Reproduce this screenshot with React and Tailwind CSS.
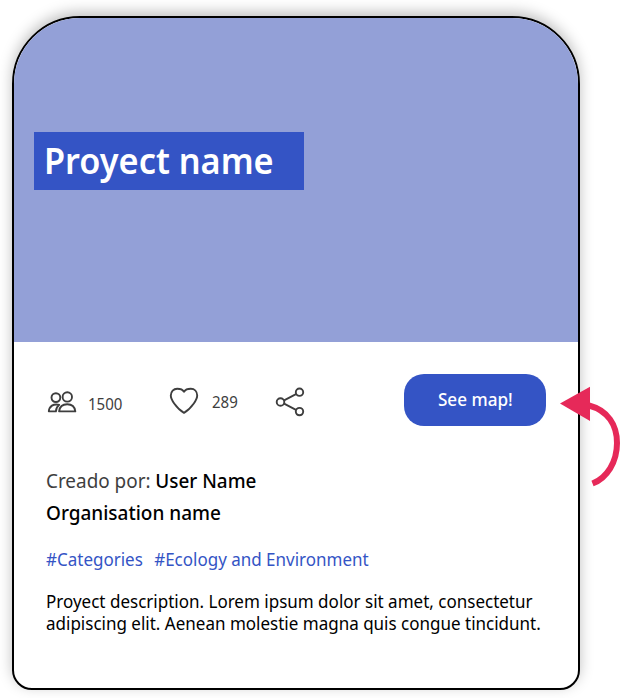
const BODY_FONT = "font-['Noto_Sans',sans-serif]";

function PeopleIcon() {
  return (
    <svg width="30" height="24" viewBox="0 0 30 24" fill="none" stroke="#3e3e3e" strokeWidth="1.9" strokeLinejoin="round">
      <circle cx="8.9" cy="7.6" r="4.4" />
      <circle cx="20.3" cy="6.9" r="4.7" />
      <path d="M12.2 14.8C6.4 13.4 2.2 16.3 1.8 21.4H8.9C9.1 18.4 10.2 16.4 12.2 14.8Z" />
      <path d="M12.1 21.4H28.3C27.8 17.2 24.8 14.3 20.2 14.3C15.6 14.3 12.6 17.2 12.1 21.4Z" />
    </svg>
  );
}

function HeartIcon() {
  return (
    <svg width="30" height="28" viewBox="0 0 30 28" fill="none" stroke="#3e3e3e" strokeWidth="1.9" strokeLinejoin="round">
      <path d="M15 25.9C12 24.2 8 20.4 5.2 16.5C2.9 13.4 1.8 11 1.8 8.6C1.8 4.5 4.6 1.8 8.2 1.8C11.4 1.8 13.8 2.8 15 4.7C16.2 2.8 18.6 1.8 21.8 1.8C25.4 1.8 28.2 4.5 28.2 8.6C28.2 11 27.1 13.4 24.8 16.5C22 20.4 18 24.2 15 25.9Z" />
    </svg>
  );
}

function ShareIcon() {
  return (
    <svg width="30" height="30" viewBox="0 0 30 30" fill="none" stroke="#3e3e3e" strokeWidth="1.9">
      <circle cx="5.5" cy="15" r="3.8" />
      <circle cx="24.5" cy="5.2" r="3.7" />
      <circle cx="24.5" cy="24.6" r="3.7" />
      <path d="M9.1 13.3L21 7.2M9.1 16.7L21 22.8" />
    </svg>
  );
}

function Arrow() {
  return (
    <svg className="absolute left-[558px] top-[384px]" width="62" height="106" viewBox="0 0 62 106" fill="none">
      <path d="M31 21.5C50 26.5 59 41 59 59C59 78 49 94 34.5 99.5" stroke="#e62959" strokeWidth="6" />
      <path d="M2 19.5L32 2.8V37Z" fill="#e62959" />
    </svg>
  );
}

export default function App() {
  return (
    <div className={`relative h-[698px] w-[620px] overflow-hidden bg-white pl-3 pt-4 ${BODY_FONT}`}>
      <article className="h-[674px] w-[568px] overflow-hidden rounded-t-[68px] rounded-b-[20px] border-2 border-black bg-white shadow-[0_-4px_14px_rgba(0,0,0,0.25)]">
        <header className="flex h-[324px] items-start bg-[#93a0d7] pl-5 pt-[114px]">
          <h1 className="h-[58px] w-[270px] whitespace-nowrap bg-[#3454c5] pl-[10px] text-[36px] leading-[58px] font-semibold text-white">
            <span className="inline-block origin-left scale-x-[0.953]">Proyect name</span>
          </h1>
        </header>
        <div className="flex h-[116px] items-start pl-8 pt-8 text-[#3e3e3e]">
          <div className="flex w-[122px] items-start pt-4">
            <div className="pl-px"><PeopleIcon /></div>
            <span className="ml-[11px] mt-[3px] origin-left scale-x-[0.94] text-[16px] leading-[22px]">1500</span>
          </div>
          <div className="flex w-[107px] items-start pt-3">
            <div className="pl-px pt-px"><HeartIcon /></div>
            <span className="ml-[13px] mt-[5px] origin-left scale-x-[0.94] text-[16px] leading-[22px]">289</span>
          </div>
          <div className="w-[129px] pt-[13px]"><ShareIcon /></div>
          <button className="flex h-[52px] w-[142px] items-start justify-center rounded-[20px] bg-[#3454c5] text-[18px] leading-[50px] font-medium text-white">
            <span className="scale-x-[0.95]">See map!</span>
          </button>
        </div>
        <section className="whitespace-nowrap pl-8 pt-[7px] text-black">
          <p className="flex origin-left scale-x-[0.945] gap-[5px] text-[20px] leading-8">
            <span className="text-[#3e3e3e]">Creado por:</span>
            <span className="font-medium">User Name</span>
          </p>
          <p className="origin-left scale-x-[0.949] text-[20px] leading-8 font-medium">Organisation name</p>
          <p className="mt-4 flex origin-left scale-x-[0.944] gap-3 text-[18px] leading-[28px] text-[#3454c5]">
            <span>#Categories</span>
            <span>#Ecology and Environment</span>
          </p>
          <p className="mt-[17px] origin-left scale-x-[0.945] text-[18px] leading-[22px]">
            Proyect description. Lorem ipsum dolor sit amet, consectetur
            <br />
            adipiscing elit. Aenean molestie magna quis congue tincidunt.
          </p>
        </section>
      </article>
      <Arrow />
    </div>
  );
}
